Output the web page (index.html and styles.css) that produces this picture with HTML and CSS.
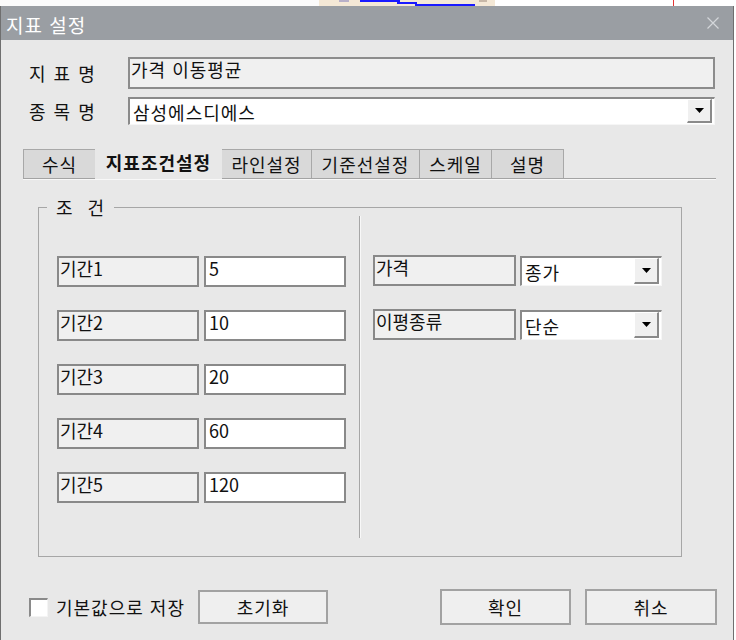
FILE: index.html
```html
<!DOCTYPE html>
<html lang="ko">
<head>
<meta charset="utf-8">
<title>지표 설정</title>
<link rel="stylesheet" href="styles.css">
</head>
<body>
<div class="backdrop">
  <div class="bd-a"></div>
  <div class="bd-b">
    <svg width="176" height="6" viewBox="0 0 176 6">
      <rect x="41" y="0" width="40" height="2" fill="#1a1aff"/>
      <rect x="78" y="2" width="20" height="2" fill="#1a1aff"/>
      <rect x="96" y="4" width="60" height="2" fill="#1a1aff"/>
      <rect x="20" y="0" width="10" height="2" fill="#b8b0c8"/>
      <rect x="160" y="0" width="8" height="2" fill="#c8b8a8"/>
    </svg>
  </div>
  <div class="bd-c"><span class="tick"></span></div>
</div>
<div class="dialog">
  <div class="titlebar">
    <span class="title">지표 설정</span>
    <svg class="close" width="12" height="12" viewBox="0 0 12 12">
      <path d="M0.5 0.5 L11.5 11.5 M11.5 0.5 L0.5 11.5" stroke="#d3d6da" stroke-width="1.2" fill="none"/>
    </svg>
  </div>
  <div class="content">
    <div class="row row-name">
      <span class="lbl">지 표 명</span>
      <div class="field readonly">가격 이동평균</div>
    </div>
    <div class="row row-item">
      <span class="lbl">종 목 명</span>
      <div class="combo combo-wide">
        <span class="combo-val">삼성에스디에스</span>
        <span class="drop"><svg width="9" height="5" viewBox="0 0 9 5"><path d="M0 0 H9 L4.5 5 Z" fill="#000"/></svg></span>
      </div>
    </div>
    <div class="tabs">
      <div class="tab w72">수식</div>
      <div class="tab sel">지표조건설정</div>
      <div class="tab w90">라인설정</div>
      <div class="tab w108">기준선설정</div>
      <div class="tab w72">스케일</div>
      <div class="tab w72">설명</div>
    </div>
    <fieldset class="group">
      <legend class="group-title">조 건</legend>
      <div class="group-body">
        <div class="col-left">
          <div class="prow"><div class="plabel">기간1</div><div class="pvalue">5</div></div>
          <div class="prow"><div class="plabel">기간2</div><div class="pvalue">10</div></div>
          <div class="prow"><div class="plabel">기간3</div><div class="pvalue">20</div></div>
          <div class="prow"><div class="plabel">기간4</div><div class="pvalue">60</div></div>
          <div class="prow"><div class="plabel">기간5</div><div class="pvalue">120</div></div>
        </div>
        <div class="sep"></div>
        <div class="col-right">
          <div class="prow rrow">
            <div class="plabel wide">가격</div>
            <div class="combo combo-small">
              <span class="combo-val">종가</span>
              <span class="drop"><svg width="9" height="5" viewBox="0 0 9 5"><path d="M0 0 H9 L4.5 5 Z" fill="#000"/></svg></span>
            </div>
          </div>
          <div class="prow rrow">
            <div class="plabel wide">이평종류</div>
            <div class="combo combo-small">
              <span class="combo-val">단순</span>
              <span class="drop"><svg width="9" height="5" viewBox="0 0 9 5"><path d="M0 0 H9 L4.5 5 Z" fill="#000"/></svg></span>
            </div>
          </div>
        </div>
      </div>
    </fieldset>
    <div class="footer">
      <span class="check"></span>
      <span class="check-label">기본값으로 저장</span>
      <div class="btn btn-reset">초기화</div>
      <div class="btn btn-ok">확인</div>
      <div class="btn btn-cancel">취소</div>
    </div>
  </div>
</div>
</body>
</html>
```

FILE: styles.css
```css
html, body {
  margin: 0;
  padding: 0;
}
body {
  width: 736px;
  height: 640px;
  overflow: hidden;
  background: #ffffff;
  font-family: "Noto Sans CJK KR", "Noto Sans", sans-serif;
  font-size: 18px;
  line-height: 21px;
  letter-spacing: 1px;
  color: #111111;
}

/* window behind the dialog */
.backdrop {
  display: flex;
  height: 6px;
}
.bd-a {
  width: 319px;
  background: #fbfbfb;
}
.bd-b {
  width: 176px;
  background: #f4e8d6;
}
.bd-b svg {
  display: block;
}
.bd-c {
  flex: 1;
  display: flex;
  background: #ffffff;
}
.tick {
  width: 1px;
  height: 6px;
  margin-left: 178px;
  background: #e53535;
}

/* dialog */
.dialog {
  width: 734px;
  height: 634px;
  box-sizing: border-box;
  border-left: 1px solid #6f6f6f;
  border-right: 1px solid #6f6f6f;
  background: #e8e8e8;
}
.titlebar {
  height: 34px;
  display: flex;
  align-items: center;
  justify-content: space-between;
  padding: 0 14px 0 5px;
  background: #9a9ea3;
  color: #ffffff;
  font-size: 19px;
}
.title {
  padding-top: 2px;
}
.close {
  display: block;
}
.content {
  padding-top: 17px;
}

.row {
  display: flex;
  align-items: center;
}
.lbl {
  width: 99px;
  padding-left: 28px;
  word-spacing: 1px;
}
.row-item {
  margin-top: 8px;
}

.field {
  box-sizing: border-box;
  width: 587px;
  height: 32px;
  border: 2px solid #8c8c8c;
  padding: 0 1px;
  background: #f0f0f0;
}

.combo {
  box-sizing: border-box;
  display: flex;
  align-items: center;
  background: #ffffff;
  border-top: 2px solid #8a8a8a;
  border-left: 2px solid #8a8a8a;
  border-right: 1px solid #f6f6f6;
  border-bottom: 1px solid #f6f6f6;
}
.combo-wide {
  width: 587px;
  height: 28px;
}
.combo-small {
  width: 142px;
  height: 30px;
  margin-top: 1px;
}
.combo-val {
  flex: 1;
  padding-left: 3px;
  padding-top: 2px;
}
.drop {
  box-sizing: border-box;
  width: 25px;
  height: calc(100% - 1px);
  display: flex;
  align-items: center;
  justify-content: center;
  background: #f0f0f0;
  border-top: 1px solid #ffffff;
  border-left: 1px solid #ffffff;
  border-right: 2px solid #8a8a8a;
  border-bottom: 2px solid #8a8a8a;
  margin-right: 2px;
  align-self: flex-start;
}
.drop svg {
  display: block;
}

/* tabs */
.tabs {
  display: flex;
  align-items: flex-end;
  width: 693px;
  margin: 21px 0 0 22px;
  border-bottom: 1px solid #a3a3a3;
  box-shadow: 0 1px 0 #f8f8f8;
}
.tab {
  box-sizing: border-box;
  height: 29px;
  display: flex;
  align-items: center;
  justify-content: center;
  background: #d9d9d9;
  border: 1px solid #a8a8a8;
  border-bottom: none;
  margin-right: -1px;
}
.w72 { width: 73px; }
.w90 { width: 91px; }
.w108 { width: 109px; }
.tab.sel {
  width: 127px;
  height: 33px;
  margin-bottom: -1px;
  padding-bottom: 2px;
  background: #e8e8e8;
  font-weight: bold;
  letter-spacing: 1px;
  border-color: #e8e8e8;
  position: relative;
  z-index: 1;
}

/* group box */
.group {
  box-sizing: border-box;
  width: 644px;
  margin: 18px 0 0 37px;
  padding: 0;
  border: 1px solid #a6a6a6;
  min-width: 0;
}
.group-title {
  margin-left: 8px;
  padding: 0 9px;
  line-height: 20px;
  word-spacing: 8px;
}
.group-body {
  display: flex;
  height: 339px;
}
.col-left {
  display: flex;
  flex-direction: column;
  gap: 23px;
  padding: 39px 0 0 18px;
}
.prow {
  display: flex;
  gap: 5px;
}
.rrow {
  gap: 4px;
}
.plabel,
.pvalue {
  box-sizing: border-box;
  width: 142px;
  height: 31px;
  border: 2px solid #898989;
  padding: 0 1px;
  background: #f0f0f0;
  letter-spacing: 0;
}
.pvalue {
  background: #ffffff;
  padding-left: 3px;
}
.plabel.wide {
  width: 143px;
}
.sep {
  width: 1px;
  height: 322px;
  margin: -1px 0 0 13px;
  background: #a6a6a6;
  box-shadow: 1px 0 0 #f8f8f8;
}
.col-right {
  display: flex;
  flex-direction: column;
  gap: 23px;
  padding: 38px 0 0 13px;
}

/* footer */
.footer {
  display: flex;
  align-items: center;
  height: 36px;
  margin-top: 32px;
}
.check {
  box-sizing: border-box;
  width: 19px;
  height: 19px;
  margin-left: 28px;
  background: #ffffff;
  border-top: 2px solid #8a8a8a;
  border-left: 2px solid #8a8a8a;
  border-right: 1px solid #f4f4f4;
  border-bottom: 1px solid #f4f4f4;
}
.check-label {
  margin-left: 8px;
}
.btn {
  box-sizing: border-box;
  height: 36px;
  display: flex;
  align-items: center;
  justify-content: center;
  background: #efefef;
  border: 2px solid #a2a2a2;
}
.btn-reset {
  width: 130px;
  height: 34px;
  margin-left: 13px;
}
.btn-ok {
  width: 131px;
  margin-left: auto;
}
.btn-cancel {
  width: 132px;
  margin-left: 14px;
  margin-right: 16px;
}
```
